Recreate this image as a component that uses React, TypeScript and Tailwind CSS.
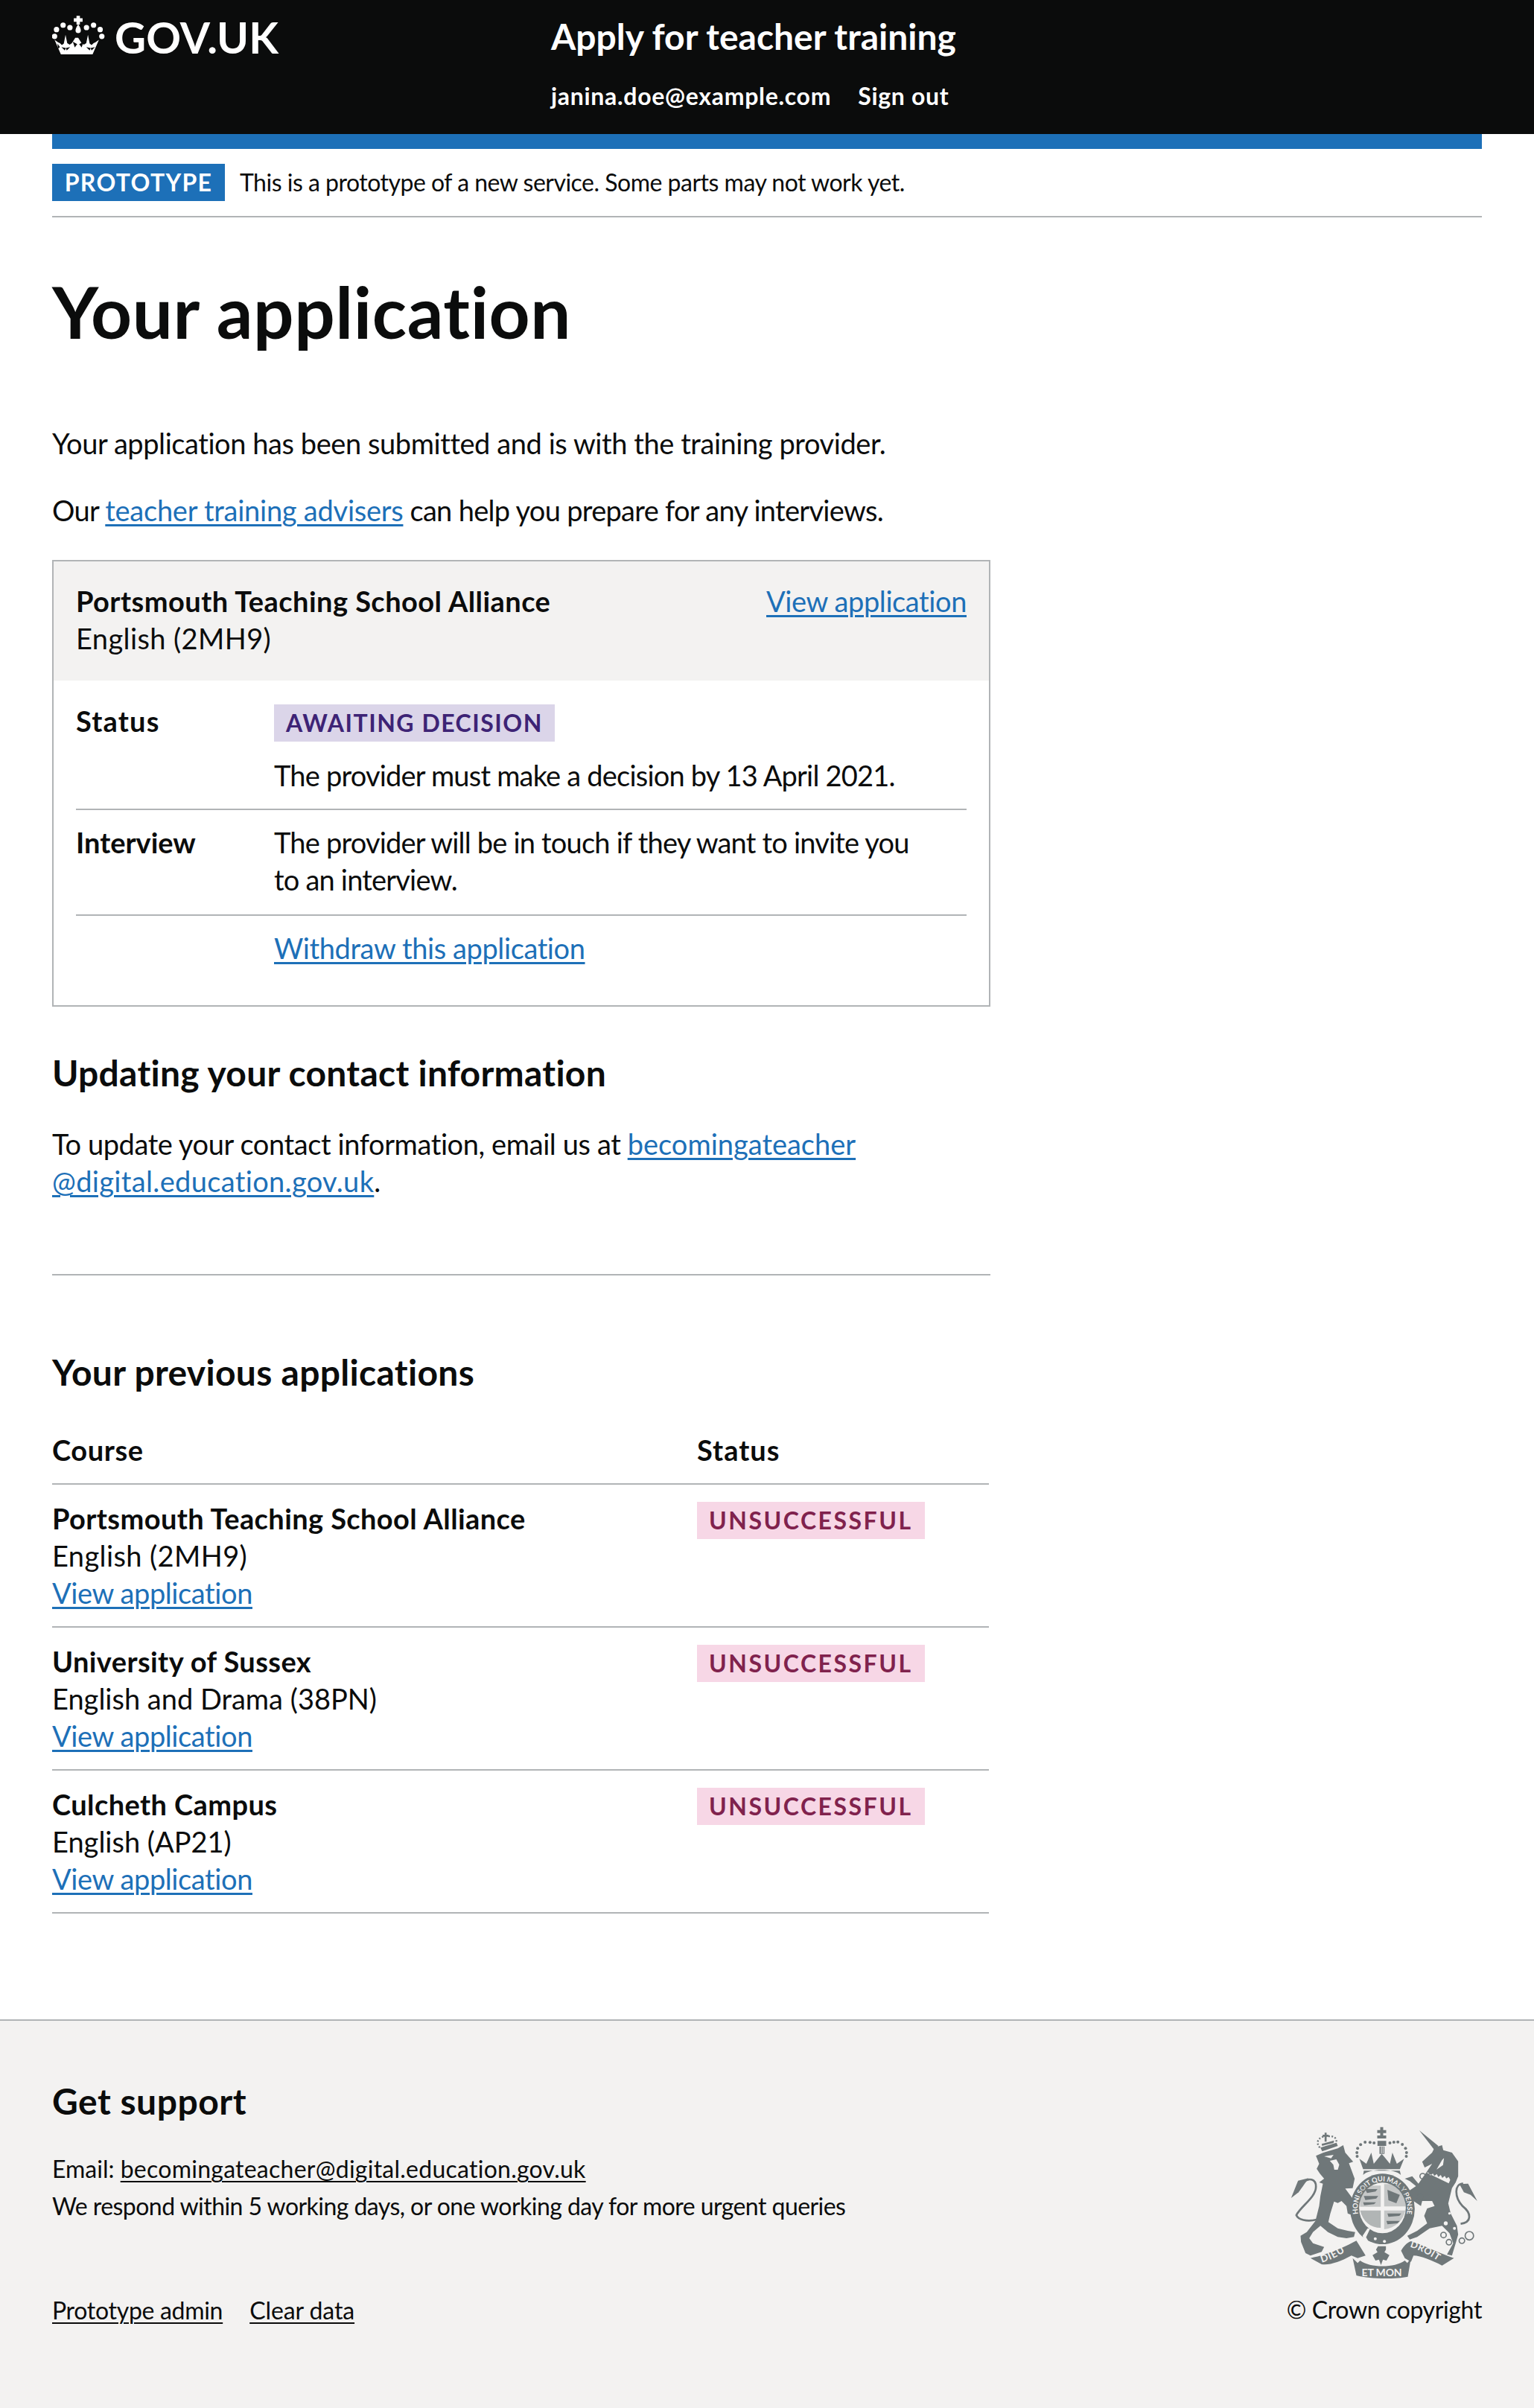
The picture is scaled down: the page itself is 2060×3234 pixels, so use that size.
import React from "react";

const link = "text-[#1d70b8] underline decoration-[3px] underline-offset-[4px]";

function Crown() {
  return (
    <svg viewBox="90 0 220 165" className="w-[72px] h-[54px] shrink-0" fill="#fff" aria-hidden="true">
      <path d="M190 4h14v10h11v14h-11v12h-14V28h-11V14h11z" />
      <path d="M197 38c7 12 11 18 11 26 0 7-5 11-11 11s-11-4-11-11c0-8 4-14 11-26z" />
      {[[100, 88], [108, 60], [135, 42], [163, 52], [231, 52], [260, 42], [287, 60], [294, 88]].map(([cx, cy]) => (
        <circle key={cx} cx={cx} cy={cy} r="11" />
      ))}
      <path d="M100 102l14 10 8 4 8 8 8-6 7-36 7 34 10 6 9-6 14-22 12 0 14 22 9 6 10-6 7-34 7 36 8 6 8-8 8-4 14-10-26 60H126z" />
      <path fill="#0b0c0c" d="M128 132l18 4-4 10zM164 132l-18 4 4 10zM175 110l18 10-10 14zM219 110l-18 10 10 14zM230 132l18 4-4 10zM266 132l-18 4 4 10zM112 118l10 14-8 6zM282 118l-10 14 8 6z" />
    </svg>
  );
}

function Crest() {
  const g = "#6f7779";
  const bg = "#f3f2f1";
  return (
    <svg viewBox="220 120 755 615" className="w-[252px] h-[205px] mr-[5px]" aria-hidden="true">
      {/* lion */}
      <path fill={g} d="M322 238L352 225L410 208L432 195L440 225L472 262L455 268L478 330L470 368L440 370L470 410L490 440L497 470L475 480L450 470L445 440L425 420L410 428L395 422L380 470L372 505L410 530L450 540L480 545L475 565L445 570L410 565L370 545L340 520L310 545L295 570L310 590L355 605L345 625L300 640L280 630L262 585L260 560L285 545L320 500L335 440L340 400L350 350L335 345L355 330L338 310L325 290L335 270Z" />
      <path fill={bg} d="M355 240l38-6-10 14zM378 258l26-6 12 22-6 20h-14l-4-20z" />
      <path fill="none" stroke={g} strokeWidth="8" d="M325 495C285 505 250 495 243 477C262 440 322 405 322 362C322 330 292 325 272 345" />
      <path fill={g} d="M292 328L250 338L222 408L252 385L270 360Z" />
      {/* lion crown */}
      <path fill={g} d="M340 205L405 185L410 198L347 220Z" />
      <path fill="none" stroke={g} strokeWidth="7" strokeDasharray="6 7" d="M338 205C315 180 340 155 370 160C395 155 410 170 402 185" />
      <path fill={g} d="M349 153h8v-8h8v8h8v8h-8v20h-8v-20h-8z" />
      <path fill={g} d="M345 190l50-14-2 10-46 12z" />
      {/* unicorn */}
      <path fill={g} d="M738 135L815 198L800 215Z" />
      <path fill={g} d="M800 205L830 195L835 215L870 225L895 260L895 320L885 345L870 368L855 430L865 470L890 520L895 555L885 590L870 640L850 635L875 590L860 550L830 520L780 530L730 565L700 575L690 560L730 540L770 510L758 480L770 450L800 440L790 420L750 420L745 440L715 420L695 380L725 360L700 340L680 330L710 320L735 350L770 300L790 270L760 285L750 262L790 225Z" />
      <path fill={bg} d="M775 305l8 12 10-8 6 10 10-8 6 12 10-8 6 12 10-8 6 10 10-6 6 12-6 14-90-44z" />
      <path fill={bg} d="M830 255l8-8-4 28-26 18z" />
      <circle cx="876" cy="428" r="10" fill={bg} />
      <circle cx="845" cy="510" r="8" fill={bg} />
      <circle cx="860" cy="470" r="5" fill={bg} />
      <circle cx="880" cy="530" r="6" fill={bg} />
      <g fill="none" stroke={g} strokeWidth="5">
        <circle cx="752" cy="320" r="11" />
        <circle cx="740" cy="403" r="13" />
        <circle cx="836" cy="557" r="11" />
        <circle cx="858" cy="586" r="11" />
        <circle cx="910" cy="580" r="11" />
        <circle cx="940" cy="560" r="17" />
        <path strokeWidth="8" d="M905 512C950 505 950 470 912 440C880 405 878 350 915 350" />
      </g>
      <path fill={g} d="M900 352L935 350L972 420L945 395L918 385Z" />
      {/* royal crown */}
      <path fill={g} d="M581 122h12v12h12v12h-12v10h12v12h-36v-12h12v-10h-12v-12h12z" />
      <g fill={g}>
        {[[487, 225], [490, 208], [502, 193], [520, 183], [540, 184], [556, 186], [620, 186], [636, 183], [652, 182], [670, 192], [683, 208], [687, 225], [488, 240], [686, 240]].map(([cx, cy]) => (
          <circle key={cx * 1000 + cy} cx={cx} cy={cy} r="6" />
        ))}
      </g>
      <path fill={g} d="M570 178h35v20h-35zM578 200h20v30h-20z" />
      <path fill={bg} d="M584 200h3v28h-3zM591 200h3v28h-3z" />
      <path fill={g} d="M497 250L525 270L545 225L555 270L575 245L587 230L600 245L620 270L630 225L648 270L677 250L660 292L512 292Z" />
      <path fill={g} d="M512 315C535 288 640 288 664 315L660 298L515 298Z" />
      {/* garter */}
      <ellipse cx="590" cy="452" rx="130" ry="142" fill={g} />
      <ellipse cx="590" cy="448" rx="94" ry="102" fill={bg} />
      <defs>
        <path id="garter" d="M515 523A100 110 0 1 1 665 523" />
        <path id="dieu" d="M345 668C395 655 440 625 475 600" />
        <path id="droit" d="M700 605C740 615 790 645 830 672" />
      </defs>
      <text fill={bg} fontSize="28" fontWeight="700" fontFamily="Lato, sans-serif" textAnchor="middle">
        <textPath href="#garter" startOffset="50%">HONI SOIT QUI MAL Y PENSE</textPath>
      </text>
      {/* quarters */}
      <g fill={g}>
        <path d="M505 358h78v85h-83c-2-30-2-55 5-85z" fillOpacity="0.35" />
        <path d="M597 352h82c6 30 6 60 3 90h-85z" fillOpacity="0.35" />
        <path d="M500 458h83v70c-40 0-72-25-83-70z" fillOpacity="0.5" />
        <path d="M597 458h85c-8 40-40 70-85 76z" fillOpacity="0.35" />
        <path d="M520 372h50l-8 10-34 6zM515 400h58l-8 10-44 6zM512 425h52l-8 8-40 4zM610 375l50 20-14 34-32-12zM610 470h56l-8 10-44 4zM606 500h54l-10 10-40 4z" />
      </g>
      {/* buckle */}
      <path fill={bg} d="M510 560l20-30 10 2-16 34 8 14-14 2z" />
      <circle cx="561" cy="572" r="6" fill={bg} />
      <circle cx="598" cy="583" r="6" fill={bg} />
      {/* motto */}
      <path fill={g} d="M300 650C355 640 430 610 485 580L522 640L490 650L465 640C420 665 375 680 345 675Z" />
      <path fill={g} d="M665 620C680 595 695 585 705 582C760 600 830 635 878 650L830 680C790 660 745 640 715 640L705 665L680 650Z" />
      <path fill={g} d="M470 650L490 670L500 660C540 690 640 690 680 660L690 670L705 650L692 725C640 735 540 735 485 720Z" />
      <text fill={bg} fontSize="40" fontWeight="700" fontFamily="Lato, sans-serif" letterSpacing="3">
        <textPath href="#dieu">DIEU</textPath>
      </text>
      <text fill={bg} fontSize="38" fontWeight="700" fontFamily="Lato, sans-serif" letterSpacing="2">
        <textPath href="#droit">DROIT</textPath>
      </text>
      <text x="587" y="722" fill={bg} fontSize="42" fontWeight="700" fontFamily="Lato, sans-serif" textAnchor="middle">ET MON</text>
      {/* fleur */}
      <path fill={g} d="M572 602h32v14l-6 10 20 12-12 22-14-4-8 22-8-22-14 4-12-22 20-12-6-10z" />
    </svg>
  );
}

function Tag({ label, tone }: { label: string; tone: string }) {
  return (
    <strong className={`inline-block h-[50px] px-4 leading-[50px] text-[32px] font-bold uppercase ${tone}`}>
      {label}
    </strong>
  );
}

const previous = [
  { provider: "Portsmouth Teaching School Alliance", course: "English (2MH9)", track: "tracking-[0.4px]" },
  { provider: "University of Sussex", course: "English and Drama (38PN)", track: "tracking-[0px]" },
  { provider: "Culcheth Campus", course: "English (AP21)", track: "tracking-[0px]" },
];

export default function App() {
  return (
    <div className="min-h-[3234px] flex flex-col font-[Lato,sans-serif] text-[#0b0c0c] bg-white text-[38px] leading-[50px] tracking-[-0.4px]">
      <header className="h-[180px] bg-[#0b0c0c] px-[70px] flex text-white">
        <div className="w-[670px] flex items-start gap-3 pt-5">
          <Crown />
          <span className="text-[58px] leading-[60px] font-bold tracking-[0.1px]">GOV.UK</span>
        </div>
        <div>
          <div className="text-[48px] leading-[50px] font-bold pt-6 tracking-[0px]">Apply for teacher training</div>
          <nav className="flex gap-9 text-[32px] font-bold mt-[30px] tracking-[0.7px]">
            <span>janina.doe@example.com</span>
            <span>Sign out</span>
          </nav>
        </div>
      </header>

      <div className="mx-[70px]">
        <div className="h-5 bg-[#1d70b8]" />
        <div className="flex items-center gap-5 pt-5 pb-5 border-b-2 border-[#b1b4b6] text-[32px]">
          <strong className="h-[50px] w-[232px] bg-[#1d70b8] text-white font-bold tracking-[1.3px] text-center leading-[50px]">PROTOTYPE</strong>
          <span className="tracking-[-0.5px]">This is a prototype of a new service. Some parts may not work yet.</span>
        </div>

        <main className="pt-[76px] pb-[142px]">
          <h1 className="text-[96px] leading-[100px] font-bold mb-[102px] tracking-[0.6px]">Your application</h1>
          <p className="mb-10 tracking-[-0.43px]">Your application has been submitted and is with the training provider.</p>
          <p className="mb-[42px] tracking-[-0.7px]">
            Our <a className={`${link} tracking-[-0.25px]`}>teacher training advisers</a> can help you prepare for any interviews.
          </p>

          <section className="w-[1260px] border-2 border-[#b1b4b6]">
            <div className="bg-[#f3f2f1] px-[30px] pt-[28px] pb-[32px] flex justify-between">
              <div>
                <div className="font-bold tracking-[0.45px]">Portsmouth Teaching School Alliance</div>
                <div className="tracking-[0.4px]">English (2MH9)</div>
              </div>
              <a className={link}>View application</a>
            </div>
            <div className="px-[30px] pt-[29px] pb-[52px]">
              <div className="flex border-b-2 border-[#b1b4b6] pb-[20px]">
                <div className="w-[266px] font-bold tracking-[1.2px]">Status</div>
                <div>
                  <Tag label="Awaiting decision" tone="bg-[#dbd5e9] text-[#3d2375] tracking-[1.5px]" />
                  <p className="mt-[20px] tracking-[-0.8px]">The provider must make a decision by 13 April 2021.</p>
                </div>
              </div>
              <div className="flex border-b-2 border-[#b1b4b6] pt-[18px] pb-[22px]">
                <div className="w-[266px] font-bold tracking-[0px]">Interview</div>
                <div className="w-[880px] tracking-[-0.8px]">The provider will be in touch if they want to invite you to an interview.</div>
              </div>
              <div className="pl-[266px] pt-[18px]">
                <a className={link}>Withdraw this application</a>
              </div>
            </div>
          </section>

          <h2 className="text-[48px] leading-[60px] font-bold mt-[59px] mb-[40px] tracking-[0.25px]">Updating your contact information</h2>
          <p className="w-[1260px]">
            To update your contact information, email us at{" "}
            <a className={`${link} tracking-[0px]`}>becomingateacher<br /><span className="tracking-[0.35px]">@digital.education.gov.uk</span></a>.
          </p>
          <hr className="w-[1260px] border-t-2 border-[#b1b4b6] mt-[100px] mb-[100px]" />

          <h2 className="text-[48px] leading-[60px] font-bold mb-[49px] tracking-[0.3px]">Your previous applications</h2>
          <table className="w-[1258px] border-collapse table-fixed">
            <thead>
              <tr className="border-b-2 border-[#b1b4b6] text-left">
                <th className="w-[866px] font-bold pb-5 tracking-[0.6px]">Course</th>
                <th className="font-bold pb-5 tracking-[1px]">Status</th>
              </tr>
            </thead>
            <tbody>
              {previous.map((row) => (
                <tr key={row.provider} className="border-b-2 border-[#b1b4b6] align-top">
                  <td className="pt-5 pb-5">
                    <div className="font-bold tracking-[0.4px]">{row.provider}</div>
                    <div className={row.track}>{row.course}</div>
                    <a className={link}>View application</a>
                  </td>
                  <td className="pt-5 pb-5">
                    <Tag label="Unsuccessful" tone="bg-[#f7d7e6] text-[#80224d] tracking-[2.5px]" />
                  </td>
                </tr>
              ))}
            </tbody>
          </table>
        </main>
      </div>

      <footer className="flex-1 bg-[#f3f2f1] border-t-2 border-[#b1b4b6] px-[70px] pt-[78px] text-[32px]">
        <div className="flex justify-between">
          <div>
            <h2 className="text-[48px] leading-[60px] font-bold mb-[36px] tracking-[0.5px]">Get support</h2>
            <p className="tracking-[0px]">Email: <a className="underline decoration-2 underline-offset-[4px] tracking-[0.25px]">becomingateacher@digital.education.gov.uk</a></p>
            <p className="tracking-[-0.55px]">We respond within 5 working days, or one working day for more urgent queries</p>
            <div className="flex gap-9 mt-[90px] tracking-[-0.3px]">
              <a className="underline decoration-2 underline-offset-[4px]">Prototype admin</a>
              <a className="underline decoration-2 underline-offset-[4px] tracking-[-0.1px]">Clear data</a>
            </div>
          </div>
          <div className="flex flex-col items-end pt-[64px]">
            <Crest />
            <span className="mt-[16px] tracking-[-0.36px]">© Crown copyright</span>
          </div>
        </div>
      </footer>
    </div>
  );
}
